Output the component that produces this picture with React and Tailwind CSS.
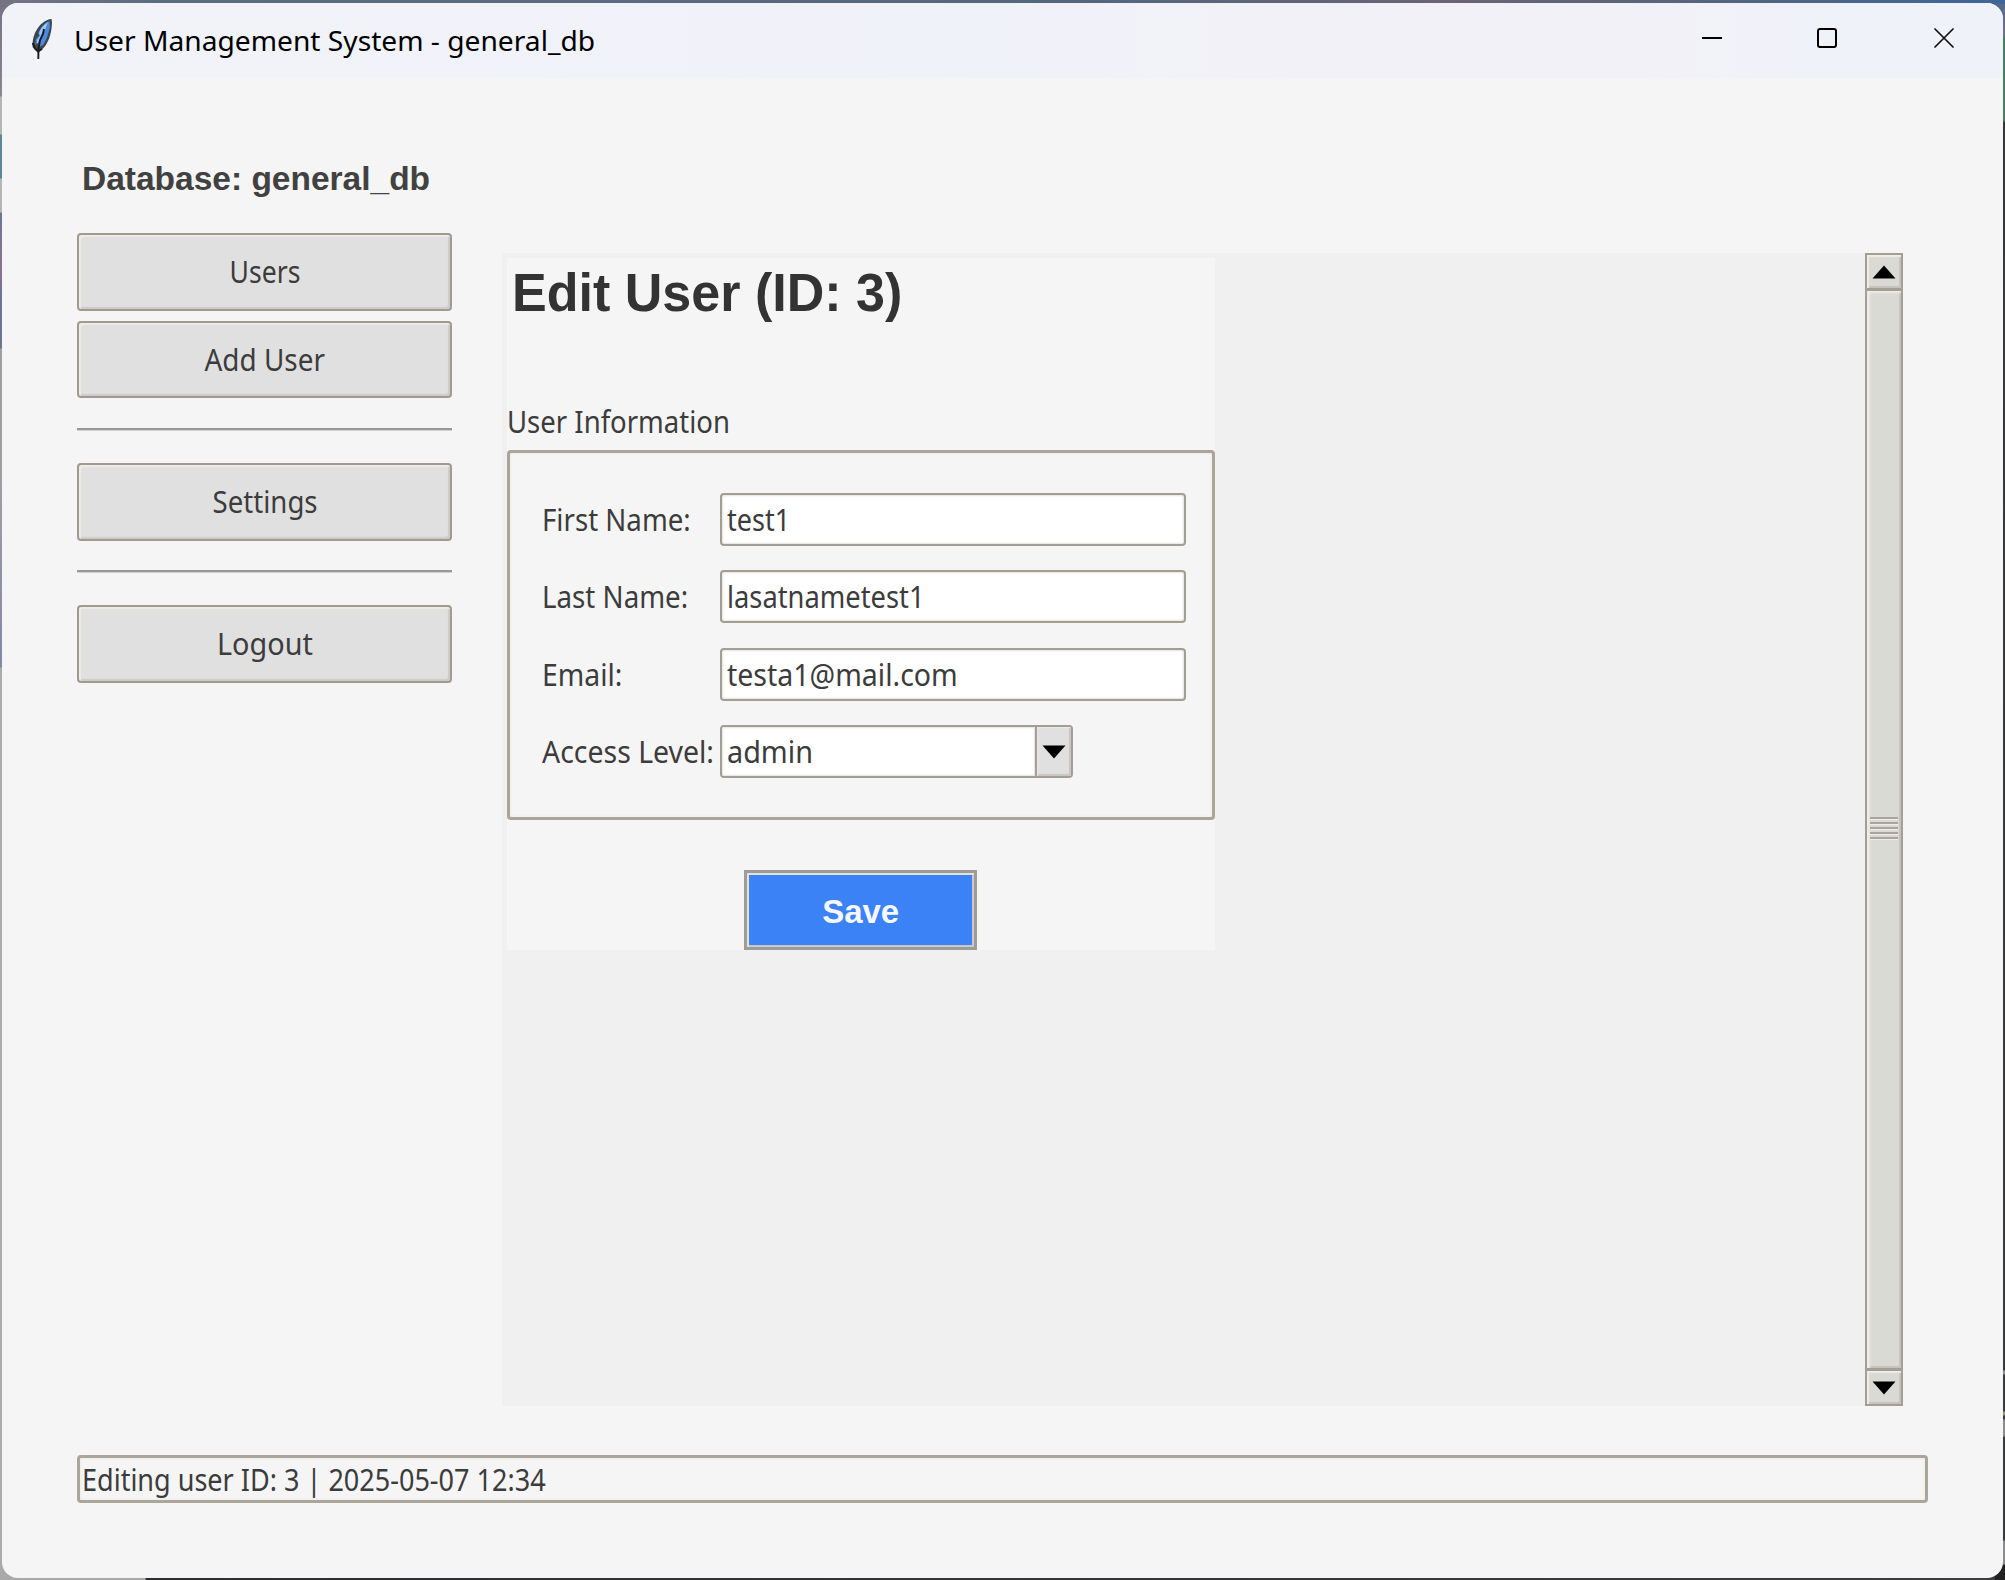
const ui = "font-['Noto_Sans',sans-serif] text-[30px] leading-[40px] text-[#3c3c3c]";

function Label({ className = "", children }) {
  return <span className={`inline-block origin-left whitespace-nowrap ${className}`}>{children}</span>;
}

function SideButton({ className = "", textClass = "", children }) {
  return (
    <button
      className={`flex w-full items-center justify-center rounded-[4px] border-2 border-[#a09b90] bg-[#e0e0e0] pl-px shadow-[inset_2px_2px_1px_#efebe6,inset_-2px_-2px_1px_#cecbc6] ${ui} ${className}`}
    >
      <span className={`inline-block whitespace-nowrap ${textClass}`}>{children}</span>
    </button>
  );
}

function Separator({ className = "" }) {
  return <div className={`h-[3px] w-full border-b border-[#d2d2d2] bg-[#98989a] ${className}`} />;
}

function Field({ label, labelClass, value, valueClass, className = "" }) {
  return (
    <div className={`flex items-center ${className}`}>
      <div className={`w-[179px] shrink-0 pl-px ${ui}`}>
        <Label className={labelClass}>{label}</Label>
      </div>
      <div className="flex h-[53px] w-[466px] items-center rounded-[4px] border-2 border-[#a39e94] bg-white pl-[5px] shadow-[inset_0_0_2px_1px_#e6e3de]">
        <span className={ui}>
          <Label className={valueClass}>{value}</Label>
        </span>
      </div>
    </div>
  );
}

function Feather() {
  return (
    <svg width="23" height="42" viewBox="0 0 23 42" className="shrink-0">
      <path d="M19.500 1C14 2 8.500 6.500 5 13C2 18.500 1 25 1.800 29.500L5.500 33L11 31.500C16 27 19 20 20.300 12C21 7.500 21.300 3.500 20.500 1Z" fill="#3f454d" />
      <path d="M18.300 3C14 5 10 9 7.500 14L8 18L5 21L4.300 27L7 24L8 29L12 27C15 23 18 15 19 8Z" fill="#4a8be0" />
      <path d="M17 4C12 7 9 11 8 16L9.500 17L6 22L6 26L9.500 21L11 15L14 12Z" fill="#9cc6f2" />
      <path d="M13 11L12 16L9 22L7.500 31L7.300 41" fill="none" stroke="#16191d" strokeWidth="1.900" />
      <path d="M1.800 25L4 30.500L7 33.500L11 31" fill="none" stroke="#181b1f" strokeWidth="2" />
    </svg>
  );
}

function ScrollArrow({ down = false, className = "" }) {
  return (
    <div
      className={`flex h-[37px] shrink-0 items-center justify-center border-2 border-[#a39f94] bg-[#dadad5] pr-px shadow-[inset_2px_2px_1px_#efebe6,inset_-2px_-2px_1px_#c5c2bb] ${className}`}
    >
      <svg width="24" height="14" viewBox="0 0 24 14">
        <path d={down ? "M0.500 0.500H23.500L12 13.500Z" : "M0.500 13.500H23.500L12 0.500Z"} fill="#000" />
      </svg>
    </div>
  );
}

function DesktopEdges() {
  return (
    <>
      <div className="absolute inset-x-0 top-0 h-8 bg-[linear-gradient(90deg,#777384_0%,#5b6b80_8%,#5d6a7f_30%,#54667d_55%,#6b6474_72%,#56657c_85%,#3f659a_100%)]" />
      <div className="absolute left-0 top-1 h-[1576px] w-4 bg-[linear-gradient(180deg,#777384_0px,#8d8590_92px,#b5b5b5_93px,#b5b5b5_130px,#5a8796_131px,#5a8796_174px,#b5b5b5_175px,#b5b5b5_208px,#6d7594_209px,#8c7390_265px,#6b7596_290px,#6b7596_344px,#a39ca6_345px,#a39ca6_480px,#8188a8_663px,#ababab_664px,#ababab_100%)]" />
      <div className="absolute right-0 top-1 h-[1576px] w-4 bg-[linear-gradient(180deg,#56698c_0px,#77708a_32px,#418060_33px,#418060_117px,#343537_118px,#3a3b3d_1366px,#8b8b8b_1367px,#8b8b8b_1370px,#3a3b3d_1371px,#3a3b3d_1407px,#969082_1408px,#969082_1411px,#3a3b3d_1412px,#3a3b3d_1415px,#8b8b8b_1416px,#8b8b8b_1432px,#3a3b3d_1433px,#3a3b3d_1536px,#8b8b8b_1537px,#8b8b8b_1560px,#222_1561px)]" />
      <div className="absolute bottom-0 left-0 h-5 w-[1995px] bg-[linear-gradient(90deg,#a9a9a9_0px,#a9a9a9_145px,#2e2e30_146px,#3c3c3e_100%)]" />
    </>
  );
}

export default function App() {
  return (
    <div className="relative h-[1580px] w-[2005px] overflow-hidden bg-[#3a3b3d] pl-[2px] pt-[3px]">
      <DesktopEdges />
      <div className="relative flex h-[1575px] w-[2001px] flex-col overflow-hidden rounded-[16px] bg-[#f5f5f5]">
        <header className="flex h-[75px] shrink-0 items-start bg-[linear-gradient(90deg,#f1f3f9_0%,#f0f2f9_50%,#f3f1f8_65%,#f3f1f8_82%,#f0f2f9_90%)] pl-[29px]">
          <div className="mt-[15px]">
            <Feather />
          </div>
          <h1 className="ml-[20px] mt-[17px] font-['Noto_Sans',sans-serif] text-[28px] leading-[40px] text-black">
            <Label className="scale-x-[1.006]">User Management System - general_db</Label>
          </h1>
          <div className="ml-auto mr-[48px] mt-[24px] flex">
            <svg width="22" height="22" viewBox="0 0 22 22">
              <path d="M1 11H21" stroke="#000" strokeWidth="2" />
            </svg>
            <svg width="22" height="22" viewBox="0 0 22 22" className="ml-[93px]">
              <rect x="2" y="2" width="18" height="18" rx="2" fill="none" stroke="#000" strokeWidth="2" />
            </svg>
            <svg width="22" height="22" viewBox="0 0 22 22" className="ml-[95px]">
              <path d="M1.500 1.500L20.500 20.500M20.500 1.500L1.500 20.500" stroke="#111" strokeWidth="1.700" />
            </svg>
          </div>
        </header>

        <div className="flex h-[1327px] shrink-0 pl-[75px]">
          <nav className="w-[375px] shrink-0 pt-[80px]">
            <div className="ml-[5px] h-[75px] font-['Liberation_Sans',sans-serif] text-[34px] font-bold leading-[40px] text-[#414141]">
              <Label className="scale-x-[0.985]">Database: general_db</Label>
            </div>
            <SideButton className="h-[78px]" textClass="scale-x-[0.885]">Users</SideButton>
            <SideButton className="mt-[10px] h-[77px]" textClass="scale-x-[0.93]">Add User</SideButton>
            <Separator className="mt-[30px]" />
            <SideButton className="mt-[32px] h-[78px]" textClass="scale-x-[0.92]">Settings</SideButton>
            <Separator className="mt-[29px]" />
            <SideButton className="mt-[32px] h-[78px]" textClass="scale-x-[0.96]">Logout</SideButton>
          </nav>

          <main className="ml-[50px] mt-[175px] flex h-[1153px] w-[1401px] bg-[#f0f0f0]">
            <section className="ml-[5px] mt-[5px] flex h-[692px] w-[708px] flex-col bg-[#f5f5f5]">
              <h2 className="ml-[5px] mt-[5px] h-[147px] font-['Liberation_Sans',sans-serif] text-[53px] font-bold leading-[60px] text-[#333]">
                <Label className="scale-x-[0.982]">Edit User (ID: 3)</Label>
              </h2>
              <div className={`-mt-[8px] h-[48px] ${ui}`}>
                <Label className="scale-x-[0.917]">User Information</Label>
              </div>
              <div className="h-[370px] w-[708px] rounded-[4px] border-[3px] border-[#aaa59b] pl-[31px] pt-[40px] shadow-[inset_0_0_2px_1px_#f0ede8]">
                <Field label="First Name:" labelClass="scale-x-[0.922]" value="test1" valueClass="scale-x-[0.9]" />
                <Field className="mt-[24px]" label="Last Name:" labelClass="scale-x-[0.924]" value="lasatnametest1" valueClass="scale-x-[0.91]" />
                <Field className="mt-[25px]" label="Email:" labelClass="scale-x-[0.945]" value="testa1@mail.com" valueClass="scale-x-[0.95]" />
                <div className="mt-[24px] flex items-center">
                  <div className={`w-[179px] shrink-0 pl-px ${ui}`}>
                    <Label className="scale-x-[0.948]">Access Level:</Label>
                  </div>
                  <div className="flex h-[53px] w-[353px] overflow-hidden rounded-[4px] border-2 border-[#a39e94] bg-white">
                    <div className={`flex flex-1 items-center pl-[5px] shadow-[inset_0_0_2px_1px_#e6e3de] ${ui}`}>
                      <Label className="scale-x-[0.96]">admin</Label>
                    </div>
                    <div className="flex w-[36px] items-center justify-center border-l-2 border-[#a39e94] bg-[#e0e0e0] shadow-[inset_1px_1px_1px_#efebe6,inset_-2px_-2px_1px_#c9c6c0]">
                      <svg width="24" height="14" viewBox="0 0 24 14">
                        <path d="M0.500 0.500H23.500L12 13.500Z" fill="#000" />
                      </svg>
                    </div>
                  </div>
                </div>
              </div>
              <button className="ml-[237px] mt-[50px] flex h-[80px] w-[233px] shrink-0 items-center justify-center border-[3px] border-[#9f9c98] bg-[#3b82f6] pt-[2px] font-['Liberation_Sans',sans-serif] text-[34px] font-bold leading-[40px] text-[#f5f8ff] shadow-[inset_2px_2px_0_#e5e2dd,inset_-2px_-2px_0_#c9c9cc]">
                <span className="inline-block scale-x-[0.97]">Save</span>
              </button>
            </section>

            <div className="ml-auto flex w-[38px] flex-col">
              <ScrollArrow />
              <div className="-mt-px flex flex-1 flex-col items-center justify-center gap-[3px] border-2 border-[#a39f94] bg-[#dadad5] pb-[4px] pr-px shadow-[inset_3px_2px_2px_#efebe6,inset_-2px_-2px_1px_#c5c2bb]">
                {[0, 1, 2, 3, 4].map((line) => (
                  <div key={line} className="h-[2px] w-[28px] bg-[#aaa59c] shadow-[0_1px_0_#efebe6]" />
                ))}
              </div>
              <ScrollArrow down className="-mt-px" />
            </div>
          </main>
        </div>

        <footer className={`ml-[75px] mt-[50px] flex h-[48px] w-[1851px] shrink-0 items-center rounded-[4px] border-[3px] border-[#aaa69c] pl-[2px] pt-px shadow-[inset_0_0_2px_1px_#efece8] ${ui}`}>
          <Label className="scale-x-[0.901]">Editing user ID: 3 | 2025-05-07 12:34</Label>
        </footer>
      </div>
    </div>
  );
}
